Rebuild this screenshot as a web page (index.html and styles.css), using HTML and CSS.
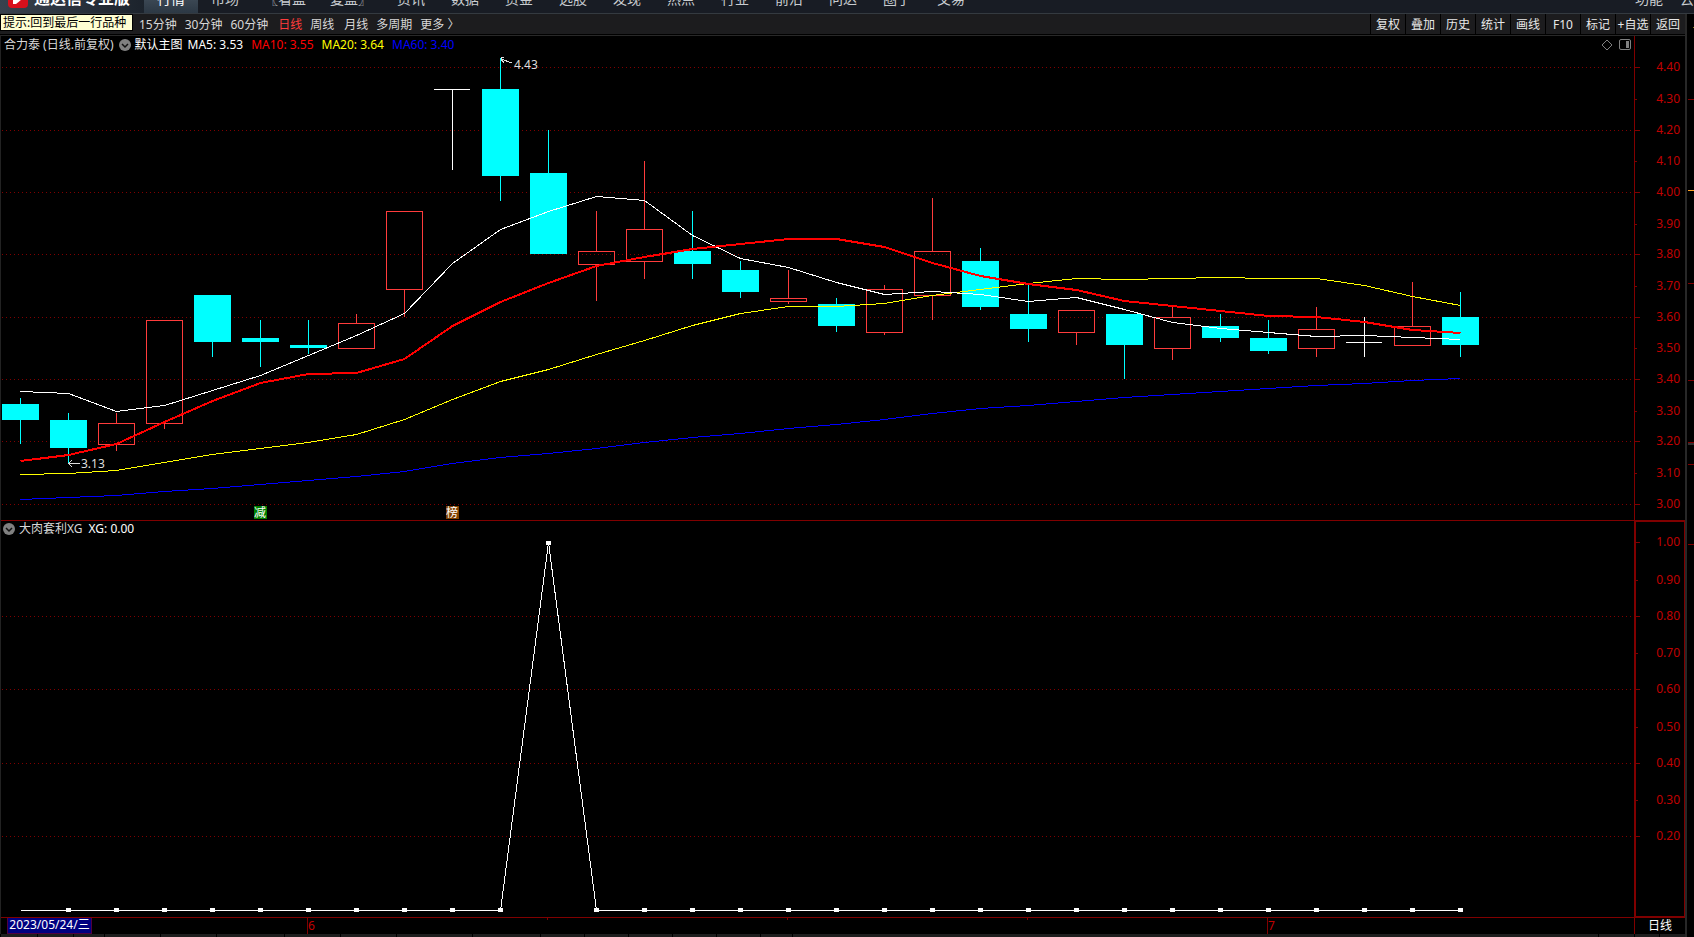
FILE: index.html
```html
<!DOCTYPE html>
<html lang="zh-CN">
<head>
<meta charset="utf-8">
<title>通达信专业版</title>
<link rel="stylesheet" href="styles.css">
</head>
<body>
<header class="topbar">
  <div class="brand">
    <svg class="logo" width="20" height="20" viewBox="0 0 20 20" aria-hidden="true">
      <rect width="20" height="20" rx="4" fill="#d8101c"/>
      <path d="M5 16 L5 8 H15 V10 Q12 13 8 16 Z" fill="#fff"/>
    </svg>
    <span class="brand-name">通达信专业版</span>
  </div>
  <nav class="menu">
    <a href="#" class="tab active">行情</a>
    <a href="#" class="tab">市场</a>
    <a href="#" class="tab wide">〖看盘</a>
    <a href="#" class="tab wide">复盘〗</a>
    <a href="#" class="tab">资讯</a>
    <a href="#" class="tab">数据</a>
    <a href="#" class="tab">资金</a>
    <a href="#" class="tab">选股</a>
    <a href="#" class="tab">发现</a>
    <a href="#" class="tab">热点</a>
    <a href="#" class="tab">行业</a>
    <a href="#" class="tab">前沿</a>
    <a href="#" class="tab">问达</a>
    <a href="#" class="tab">圈子</a>
    <a href="#" class="tab">交易</a>
  </nav>
  <div class="extras">
    <a href="#" class="extra">功能</a>
    <a href="#" class="extra">云</a>
  </div>
</header>
<div class="workspace">
  <main class="main">
    <div class="toolbar">
      <div class="hint">提示:回到最后一行品种</div>
      <div class="periods">
        <button class="period">15分钟</button>
        <button class="period">30分钟</button>
        <button class="period">60分钟</button>
        <button class="period day current">日线</button>
        <button class="period">周线</button>
        <button class="period month">月线</button>
        <button class="period">多周期</button>
        <button class="period">更多 〉</button>
      </div>
      <div class="tools">
        <button class="tool">复权</button>
        <button class="tool">叠加</button>
        <button class="tool">历史</button>
        <button class="tool">统计</button>
        <button class="tool">画线</button>
        <button class="tool">F10</button>
        <button class="tool">标记</button>
        <button class="tool">+自选</button>
        <button class="tool">返回</button>
      </div>
    </div>
    <section class="panel price">
      <div class="info">
        <span class="stock">合力泰 (日线.前复权)</span>
        <button class="toggle" aria-label="指标菜单"><svg width="12" height="12" viewBox="0 0 12 12"><circle cx="6" cy="6" r="6" fill="#808080"/><path d="M3 5 L6 8 L9 5" fill="none" stroke="#111" stroke-width="1.5"/></svg></button>
        <span class="white">默认主图</span>
        <span class="white">MA5: 3.53</span>
        <span class="average red">MA10: 3.55</span>
        <span class="average yellow">MA20: 3.64</span>
        <span class="average blue">MA60: 3.40</span>
        <div class="corner">
          <svg width="12" height="12" viewBox="0 0 12 12"><path d="M6 1 L11 6 L6 11 L1 6 Z" fill="none" stroke="#808080"/></svg>
          <svg width="12" height="12" viewBox="0 0 12 12"><rect x=".5" y=".5" width="11" height="10" rx="1.5" fill="none" stroke="#808080"/><rect x="7" y="2" width="3" height="7" fill="#808080"/></svg>
        </div>
      </div>
      <div class="plot"><svg id="price-plot"></svg></div>
      <div class="axis"><svg id="price-axis"></svg></div>
    </section>
    <section class="panel signal">
      <div class="info">
        <button class="toggle" aria-label="指标菜单"><svg width="12" height="12" viewBox="0 0 12 12"><circle cx="6" cy="6" r="6" fill="#808080"/><path d="M3 5 L6 8 L9 5" fill="none" stroke="#111" stroke-width="1.5"/></svg></button>
        <span class="soft">大肉套利XG</span>
        <span class="white">XG: 0.00</span>
      </div>
      <div class="plot"><svg id="signal-plot"></svg></div>
      <div class="axis"><svg id="signal-axis"></svg></div>
    </section>
    <footer class="timeline">
      <div class="dates"><svg id="date-axis"></svg></div>
      <div class="unit">日线</div>
    </footer>
    <div class="ticker"><svg id="ticker-cells"></svg></div>
  </main>
  <aside class="side"><svg id="side-marks"></svg></aside>
</div>
<script src="chart.js"></script>
</body>
</html>
```

FILE: styles.css
```css
* { box-sizing: border-box; }

body {
  margin: 0;
  height: 100vh;
  display: flex;
  flex-direction: column;
  overflow: hidden;
  background: #000;
  color: #e0e0e0;
  font-family: "Noto Sans", "Noto Sans CJK SC", sans-serif;
  font-size: 12px;
  line-height: 16px;
}

button {
  margin: 0;
  padding: 0;
  border: 0;
  background: none;
  color: inherit;
  font: inherit;
  white-space: nowrap;
}

a { color: inherit; text-decoration: none; }

svg { display: block; }

.topbar {
  flex: none;
  height: 14px;
  display: flex;
  align-items: flex-end;
  overflow: hidden;
  background: #181c24;
  border-bottom: 1px solid #343a40;
}

.brand {
  width: 144px;
  height: 28px;
  display: flex;
  flex: none;
  align-items: flex-end;
  gap: 6px;
  padding: 0 0 5px 8px;
  background: linear-gradient(90deg, #38424e, #1c232c);
}

.brand-name {
  font-size: 16px;
  line-height: 20px;
  font-weight: 700;
  white-space: nowrap;
  color: #fff;
}

.menu { display: flex; }

.tab {
  width: 54px;
  height: 28px;
  padding-top: 4px;
  font-size: 14px;
  line-height: 20px;
  text-align: center;
  white-space: nowrap;
  color: #c8ccd0;
}

.tab.wide { width: 66px; }

.tab.active {
  background: linear-gradient(#4c5864, #2c3844);
  color: #fff;
}

.extras {
  display: flex;
  gap: 17px;
  margin-left: auto;
  height: 28px;
  padding-top: 4px;
  font-size: 14px;
  line-height: 20px;
  color: #c8ccd0;
}

.extra { flex: none; }

.workspace {
  flex: 1;
  display: flex;
  min-height: 0;
}

.main {
  flex: 1;
  min-width: 0;
  display: flex;
  flex-direction: column;
}

.toolbar {
  flex: none;
  height: 20px;
  display: flex;
  align-items: stretch;
  background: #1c1c1e;
}

.hint {
  width: 133px;
  height: 17px;
  padding: 0 2px;
  line-height: 15px;
  white-space: nowrap;
  border: 1px solid #000;
  background: #ffffd2;
  color: #000;
}

.periods {
  display: flex;
  gap: 8px;
  margin-left: 6px;
}

.period { padding-top: 2px; color: #d8d8d8; }
.day { margin-left: 2px; }
.month { margin-left: 2px; }
.period.current { color: #ff3c3c; }

.tools {
  display: flex;
  margin-left: auto;
}

.tool {
  width: 35px;
  padding-top: 2px;
  border-left: 1px solid #000;
  color: #e8e8e8;
}

.panel {
  display: grid;
  grid-template-columns: minmax(0, 1fr) 51px;
  grid-template-rows: auto minmax(0, 1fr);
  min-height: 0;
  border-left: 1px solid #222;
}

.price {
  flex: 485 1 0;
  border-top: 1px solid #282828;
  margin-top: 1px;
}

.signal { flex: 398 1 0; }

.info {
  display: flex;
  align-items: center;
  gap: 5px;
  height: 19px;
  padding: 0 0 2px 3px;
  white-space: nowrap;
}

.signal .info {
  height: 17px;
  padding: 0 0 0 2px;
  border-top: 1px solid #800000;
}

.toggle { margin-right: -1px; }
.average { margin-left: 3px; }
.soft { margin-right: 1px; }

.corner {
  display: flex;
  gap: 6px;
  margin-left: auto;
  padding-right: 3px;
}

.stock, .soft { color: #d8d8d8; }
.white { color: #fff; }
.red { color: #f00; }
.yellow { color: #ff0; }
.blue { color: #00f; }

.plot {
  grid-row: 2;
  min-height: 0;
  overflow: hidden;
}

.signal .plot { border-bottom: 1px solid #800000; }

.axis {
  grid-column: 2;
  grid-row: 1 / 3;
  min-height: 0;
  overflow: hidden;
  border-left: 1px solid #800000;
}

.signal .axis {
  border: solid #800000;
  border-width: 2px 1px 2px 2px;
}

.timeline {
  flex: none;
  display: flex;
  height: 16px;
  border-left: 1px solid #222;
}

.dates { flex: 1; min-width: 0; overflow: hidden; }

.unit {
  width: 51px;
  border-left: 1px solid #800000;
  line-height: 15px;
  text-align: center;
  color: #fff;
}

.ticker {
  flex: none;
  height: 3px;
  background: #1e1e1e;
}

.side {
  flex: none;
  width: 9px;
  border-left: 2px solid #282828;
  overflow: hidden;
}

text {
  font-family: "Noto Sans", "Noto Sans CJK SC", sans-serif;
  font-size: 12px;
}

.crisp { shape-rendering: crispEdges; }
```

FILE: chart.js
```js
// open, close, high, low
const candles = [
  [3.32, 3.27, 3.34, 3.19], [3.27, 3.18, 3.29, 3.13], [3.19, 3.26, 3.29, 3.17],
  [3.26, 3.59, 3.59, 3.24], [3.67, 3.52, 3.67, 3.47], [3.53, 3.52, 3.59, 3.44],
  [3.51, 3.50, 3.59, 3.48], [3.50, 3.58, 3.61, 3.50], [3.69, 3.94, 3.94, 3.60],
  [4.33, 4.33, 4.33, 4.07], [4.33, 4.05, 4.43, 3.97], [4.06, 3.80, 4.20, 3.80],
  [3.77, 3.81, 3.94, 3.65], [3.78, 3.88, 4.10, 3.72], [3.81, 3.77, 3.94, 3.72],
  [3.75, 3.68, 3.78, 3.66], [3.65, 3.66, 3.75, 3.64], [3.64, 3.57, 3.66, 3.55],
  [3.55, 3.69, 3.70, 3.54], [3.67, 3.81, 3.98, 3.59], [3.78, 3.63, 3.82, 3.62],
  [3.61, 3.56, 3.70, 3.52], [3.55, 3.62, 3.62, 3.51], [3.61, 3.51, 3.61, 3.40],
  [3.50, 3.60, 3.63, 3.46], [3.57, 3.53, 3.61, 3.52], [3.53, 3.49, 3.59, 3.48],
  [3.50, 3.56, 3.63, 3.47], [3.52, 3.52, 3.60, 3.47], [3.51, 3.57, 3.71, 3.51],
  [3.60, 3.51, 3.68, 3.47]
];

// moving averages, as levels on the 937-unit screen scale
const averages = [
  { color: '#00f', width: 1, y: [499, 497, 495, 491, 488, 484, 480, 476, 471, 463, 457, 453, 448, 442, 437, 433, 428, 424, 419, 413, 408, 405, 401, 397, 394, 391, 388, 385, 383, 380, 378] },
  { color: '#ff0', width: 1, y: [474, 473, 470, 462, 454, 448, 442, 434, 419, 399, 381, 369, 354, 340, 325, 313, 306, 306, 303, 295, 289, 283, 278, 279, 278, 277, 278, 278, 285, 296, 305] },
  { color: '#fff', width: 1, y: [391, 393, 411, 405, 390, 375, 355, 335, 313, 263, 229, 211, 196, 200, 235, 258, 267, 282, 294, 291, 294, 301, 297, 309, 322, 328, 332, 336, 335, 337, 339] },
  { color: '#f00', width: 2, y: [461, 455, 444, 422, 401, 383, 374, 373, 359, 326, 302, 283, 266, 257, 249, 244, 239, 239, 247, 263, 276, 284, 290, 301, 306, 311, 316, 317, 322, 330, 333] }
];

const signal = candles.map((c, i) => (i === 11 ? 1 : 0));

const line = (x1, y1, x2, y2, color, extra = '') =>
  `<path class="crisp" d="M${x1} ${y1}L${x2} ${y2}" stroke="${color}" fill="none" ${extra}/>`;
const rect = (x, y, w, h, fill) =>
  `<rect class="crisp" x="${x}" y="${y}" width="${w}" height="${h}" fill="${fill}"/>`;
const label = (x, y, s, color, anchor = 'start') =>
  `<text x="${x}" y="${y}" fill="${color}" text-anchor="${anchor}">${s}</text>`;

function size(id) {
  const svg = document.getElementById(id);
  const box = svg.parentElement;
  const w = box.clientWidth, h = box.clientHeight;
  svg.setAttribute('width', w);
  svg.setAttribute('height', h);
  return { svg, w, h };
}

function drawPrice() {
  const { svg, w, h } = size('price-plot');
  const k = h / 465;
  const level = y => (y - 55) * k;
  const Y = p => Math.round(level(67.2 + (4.4 - p) * 311.8));
  const X = i => Math.round((19 + 48 * i) * w / 1633);
  const half = Math.round(18 * w / 1633);
  let out = '';
  for (let n = 0; n <= 7; n++) {
    const y = Y(3 + n * 0.2) + 0.5;
    out += line(1, y, w, y, '#800000', 'stroke-dasharray="1 3"');
  }
  candles.forEach(([o, c, hi, lo], i) => {
    const x = X(i), top = Y(Math.max(o, c)), bottom = Y(Math.min(o, c));
    if (o === c) {
      out += rect(x - half, top, half * 2, 1, '#fff') + rect(x, Y(hi), 1, Y(lo) - Y(hi), '#fff');
    } else if (o > c) {
      out += rect(x, Y(hi), 1, Y(lo) - Y(hi), '#0ff') + rect(x - half, top, half * 2 + 1, bottom - top, '#0ff');
    } else {
      out += rect(x, Y(hi), 1, top - Y(hi), '#ff3c3c');
      out += rect(x, bottom, 1, Math.max(0, Y(lo) - bottom), '#ff3c3c');
      out += `<rect class="crisp" x="${x - half + 0.5}" y="${top + 0.5}" width="${half * 2}" height="${bottom - top}" fill="none" stroke="#ff3c3c"/>`;
    }
  });
  averages.forEach(a => {
    const off = a.width === 1 ? 0.5 : 0;
    const pts = a.y.map((y, i) => `${X(i) + 0.5},${Math.round(level(y)) + off}`).join(' ');
    out += `<polyline class="crisp" points="${pts}" fill="none" stroke="${a.color}" stroke-width="${a.width}"/>`;
  });
  const hx = X(10), hy = Y(4.43);
  out += `<path class="crisp" d="M${hx + 12} ${hy + 5}L${hx + 1} ${hy + 1}M${hx + 4} ${hy - 0.5}H${hx + 1}V${hy + 1}L${hx + 4} ${hy + 5}" stroke="#ddd" fill="none"/>`;
  out += label(hx + 14, hy + 11, '4.43', '#ddd');
  const lx = X(1), ly = Y(3.13);
  out += `<path class="crisp" d="M${lx + 12} ${ly + 0.5}H${lx + 1}M${lx + 4} ${ly - 3}L${lx + 1} ${ly + 0.5}L${lx + 4} ${ly + 4}" stroke="#ddd" fill="none"/>`;
  out += label(lx + 13, ly + 5, '3.13', '#ddd');
  [[5, '减', '#008000'], [9, '榜', '#804000']].forEach(([i, s, fill]) => {
    const x = X(i) - 6, y = Math.round(level(506));
    out += rect(x, y, 13, 13, fill) + label(x + 6, y + 11, s, '#fff', 'middle');
  });
  svg.innerHTML = out;
}

function drawAxis(id, values, toY, major) {
  const { svg, w } = size(id);
  const right = id === 'price-axis' ? w - 5 : w - 4;
  svg.innerHTML = values.map((v, n) => {
    const long = major(n);
    const y = long ? Math.round(toY(v)) : Math.ceil(toY(v));
    return rect(0, y, long ? (id === 'price-axis' ? 5 : 4) : 2, 1, '#800000') +
      label(right, y + 4, v.toFixed(2), '#c00000', 'end');
  }).join('');
}

function drawSignal() {
  const { svg, w, h } = size('signal-plot');
  const k = h / 380;
  const Y = v => Math.round((372.6 - 367.2 * v) * k);
  const X = i => Math.round((19 + 48 * i) * w / 1633);
  let out = '';
  [0.2, 0.4, 0.6, 0.8].forEach(v => {
    out += line(1, Y(v) + 0.5, w, Y(v) + 0.5, '#800000', 'stroke-dasharray="1 3"');
  });
  out += `<polyline class="crisp" points="${signal.map((v, i) => `${X(i) + 0.5},${Y(v) + 0.5}`).join(' ')}" fill="none" stroke="#fff"/>`;
  signal.forEach((v, i) => {
    if (i) out += rect(X(i) - 2, Y(v) - 2 + (v ? 1 : 0), 5, 4, '#fff');
  });
  svg.innerHTML = out;
}

function drawDates() {
  const { svg, w } = size('date-axis');
  const X = x => Math.round(x * w / 1633);
  let out = `<rect class="crisp" x="6.5" y="-.5" width="84" height="16" fill="#000080" stroke="#500040"/>`;
  out += label(48.5, 11, '2023/05/24/三', '#fff', 'middle');
  [[306, '6'], [1266, '7']].forEach(([x, s]) => {
    out += rect(X(x), 0, 1, 16, '#800000') + label(X(x) + 1, 12, s, '#c00000');
  });
  [546, 786, 1026].forEach(x => { out += rect(X(x), 0, 1, 2, '#800000'); });
  svg.innerHTML = out;
}

function drawTicker() {
  const { svg, w } = size('ticker-cells');
  svg.innerHTML = [0, 37, 73, 104, 160, 216, 284, 340, 396, 472, 540, 584, 628, 672, 716, 760, 792, 1598, 1634, 1659]
    .map(x => rect(Math.round(x * w / 1685), 0, 1, 3, '#000')).join('');
}

function drawSide() {
  const { svg, w, h } = size('side-marks');
  const k = h / 923;
  svg.innerHTML = [[27, '#8a7a20'], [99, '#800000'], [190, '#ffa020'], [283, '#800000'], [380, '#800000'],
    [442, '#800000'], [443, '#303030'], [444, '#303030'], [464, '#800000'], [544, '#800000']]
    .map(([y, c]) => rect(y === 27 ? 6 : 1, Math.round((y - 14) * k), w, 1, c)).join('');
}

function draw() {
  drawPrice();
  drawSignal();
  const pk = document.querySelector('.price .plot').clientHeight / 465;
  const prices = Array.from({ length: 15 }, (_, n) => 3 + n / 10);
  drawAxis('price-axis', prices, p => 19 + (12.2 + (4.4 - p) * 311.8) * pk, n => n % 2 === 0);
  const sk = document.querySelector('.signal .plot').clientHeight / 380;
  const levels = Array.from({ length: 9 }, (_, n) => (n + 2) / 10);
  drawAxis('signal-axis', levels, v => 15 + (372.6 - 367.2 * v) * sk, n => n % 2 === 0);
  drawDates();
  drawTicker();
  drawSide();
}

window.addEventListener('resize', draw);
draw();
```
